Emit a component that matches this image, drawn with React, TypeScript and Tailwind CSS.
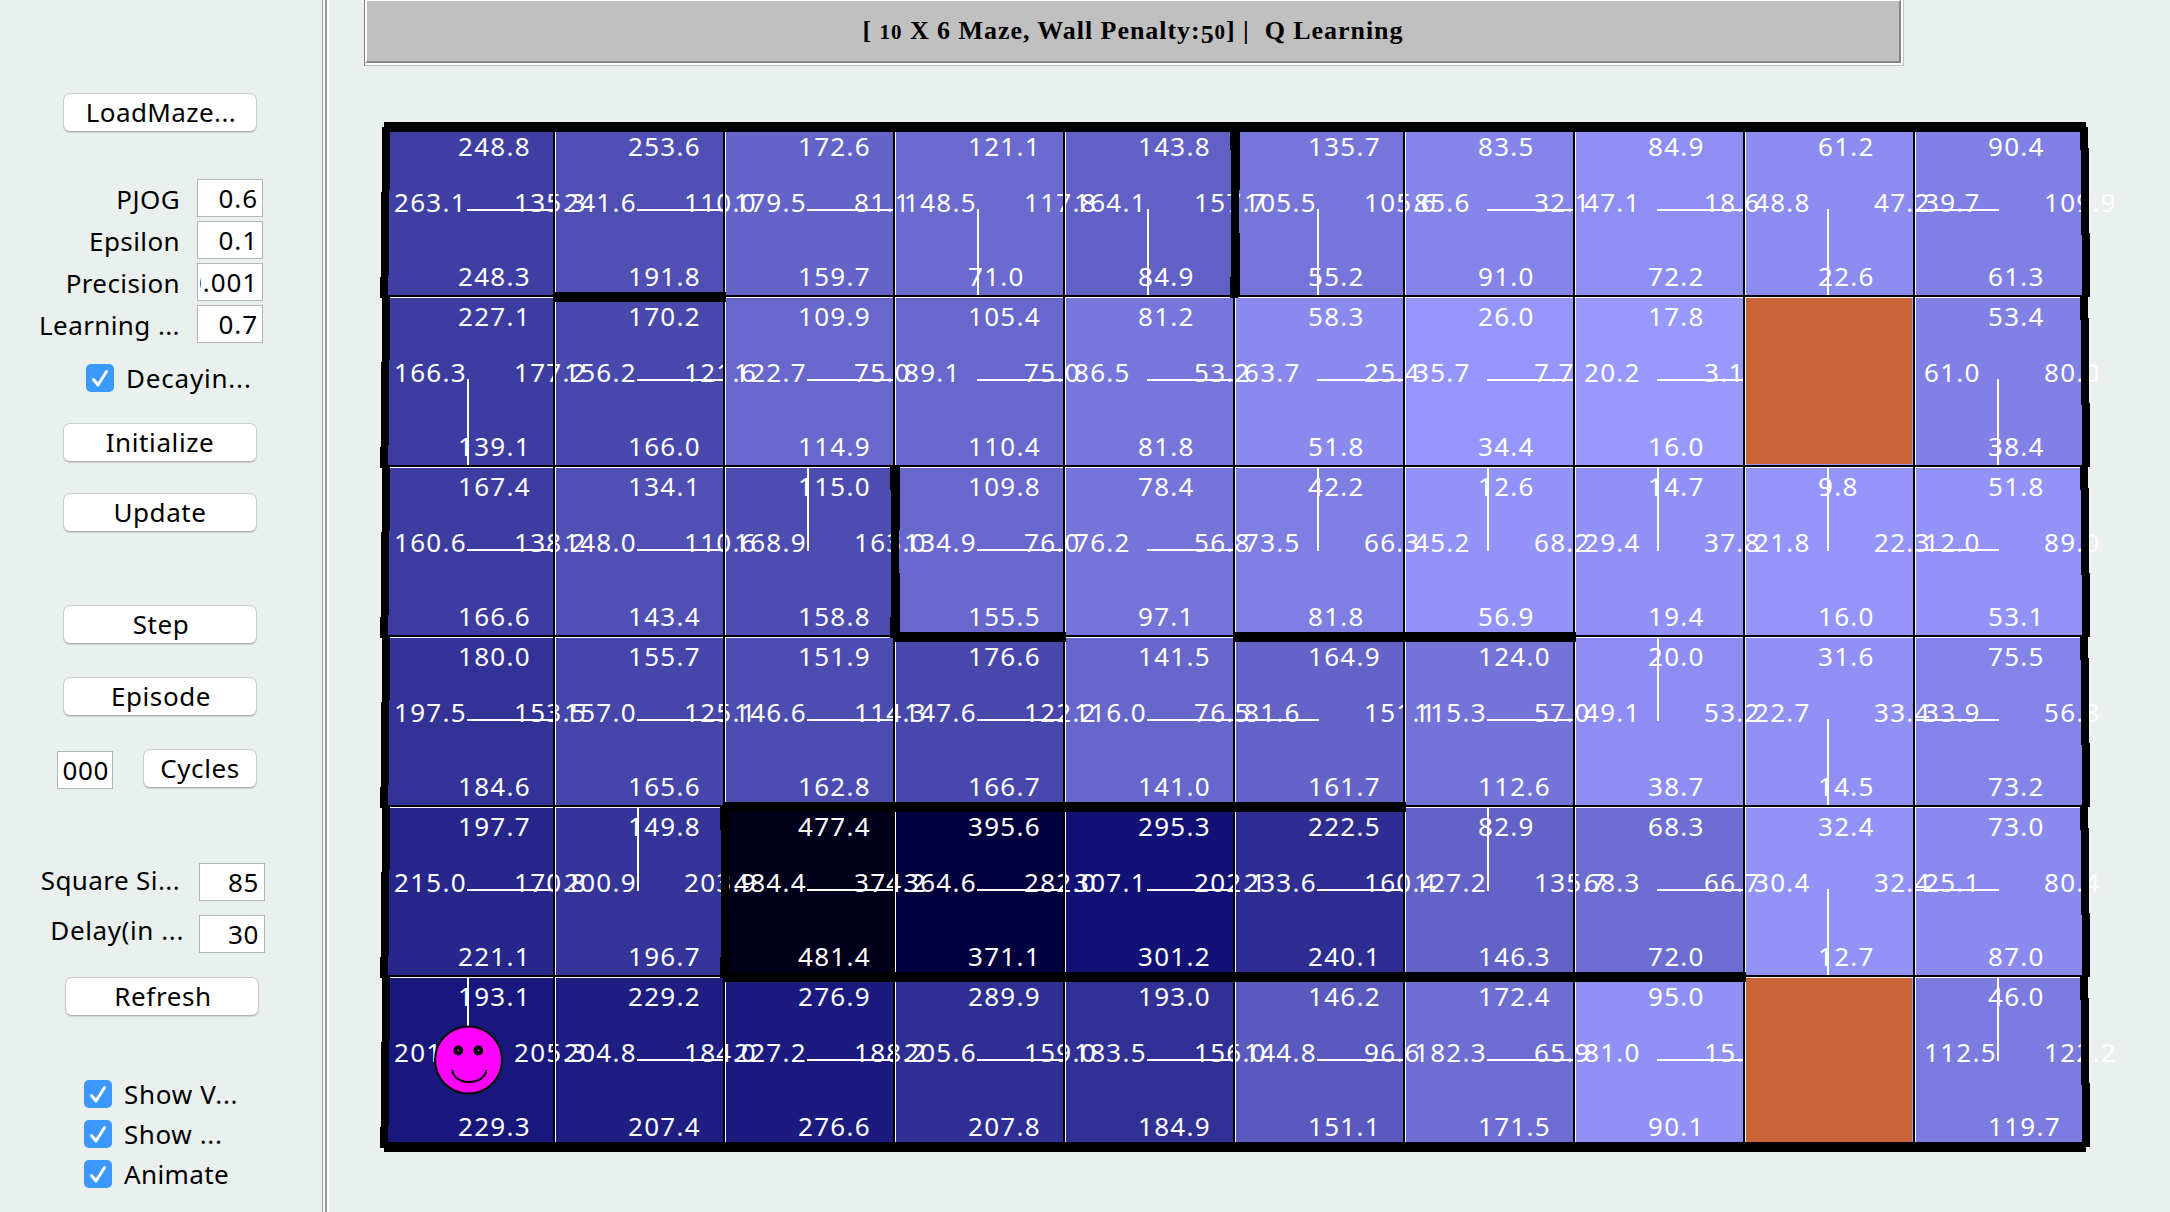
import React from "react";

type Cell = [string, string, string, string] | null; // top, bottom, left, right

const parse = (row: string): Cell[] =>
  row.split("|").map((c) => {
    const v = c.trim().split(" ");
    return v.length === 4 ? (v as [string, string, string, string]) : null;
  });

const ROWS: Cell[][] = [
  "248.8 248.3 263.1 135.3|253.6 191.8 241.6 110.0|172.6 159.7 179.5 81.1|121.1 71.0 148.5 117.8|143.8 84.9 164.1 157.7|135.7 55.2 105.5 105.6|83.5 91.0 85.6 32.1|84.9 72.2 47.1 18.6|61.2 22.6 48.8 47.2|90.4 61.3 39.7 109.9",
  "227.1 139.1 166.3 177.2|170.2 166.0 156.2 121.6|109.9 114.9 122.7 75.0|105.4 110.4 89.1 75.0|81.2 81.8 86.5 53.2|58.3 51.8 63.7 25.4|26.0 34.4 35.7 7.7|17.8 16.0 20.2 3.1|goal|53.4 38.4 61.0 80.0",
  "167.4 166.6 160.6 138.2|134.1 143.4 148.0 110.6|115.0 158.8 168.9 163.0|109.8 155.5 134.9 76.0|78.4 97.1 76.2 56.8|42.2 81.8 73.5 66.3|12.6 56.9 45.2 68.2|14.7 19.4 29.4 37.8|9.8 16.0 21.8 22.3|51.8 53.1 12.0 89.0",
  "180.0 184.6 197.5 153.5|155.7 165.6 157.0 125.1|151.9 162.8 146.6 114.3|176.6 166.7 147.6 122.2|141.5 141.0 116.0 76.5|164.9 161.7 81.6 151.1|124.0 112.6 115.3 57.0|20.0 38.7 49.1 53.2|31.6 14.5 22.7 33.4|75.5 73.2 33.9 56.8",
  "197.7 221.1 215.0 170.8|149.8 196.7 200.9 203.9|477.4 481.4 484.4 374.2|395.6 371.1 364.6 282.0|295.3 301.2 307.1 202.1|222.5 240.1 233.6 160.4|82.9 146.3 127.2 135.7|68.3 72.0 68.3 66.7|32.4 12.7 30.4 32.4|73.0 87.0 25.1 80.4",
  "193.1 229.3 201 205.3|229.2 207.4 204.8 184.0|276.9 276.6 227.2 188.2|289.9 207.8 205.6 159.0|193.0 184.9 183.5 156.0|146.2 151.1 144.8 96.6|172.4 171.5 182.3 65.9|95.0 90.1 81.0 15.|goal|46.0 119.7 112.5 122.2",
].map(parse);

const POLICY_LINE = [
  "left-[82px] top-0 w-[2px] h-[84px]",
  "left-[82px] top-[82px] w-[2px] h-[86px]",
  "left-0 top-[82px] w-[84px] h-[2px]",
  "left-[82px] top-[82px] w-[86px] h-[2px]",
];

const shade = (v: number) => {
  const rg = Math.round(155.2 - 0.68 * v);
  const c = Math.max(0, rg);
  return `rgb(${c}, ${c}, ${Math.max(28, rg + 100)})`;
};

const VALUE = "absolute z-10 whitespace-pre text-[26px] leading-[26px] tracking-[1.3px] text-white";

function MazeCell({ cell }: { cell: Cell }) {
  const nums = cell ? cell.map(Number) : [0];
  const best = Math.min(...nums);
  return (
    <div
      className="relative h-[170px] w-[170px] border-l border-t border-white"
      style={{ backgroundColor: cell ? shade(best) : "#9999fd" }}
    >
      <div className="absolute -left-px -top-px h-[170px] w-[170px]">
        {cell && (
          <>
            <span className={`${VALUE} left-[73px] top-[6px]`}>{cell[0]}</span>
            <span className={`${VALUE} left-[73px] top-[136px]`}>{cell[1]}</span>
            <span className={`${VALUE} left-[9px] top-[62px]`}>{cell[2]}</span>
            <span className={`${VALUE} left-[129px] top-[62px]`}>{cell[3]}</span>
            <i className={`absolute z-10 bg-white ${POLICY_LINE[nums.indexOf(best)]}`} />
          </>
        )}
        <i className="absolute inset-0 z-20 border-b-2 border-r-2 border-black" />
        {!cell && <i className="absolute left-px top-px z-30 h-[166px] w-[166px] bg-[#c86437]" />}
      </div>
    </div>
  );
}

// [row boundary, first column, last column]
const H_WALLS = [
  [0, 0, 9], [6, 0, 9], [1, 1, 1], [3, 3, 3], [3, 5, 6], [4, 2, 5], [5, 2, 7],
];
// [column whose left side is walled, row]
const LEFT_WALLS = [[0, 0], [0, 1], [0, 2], [0, 3], [0, 4], [0, 5], [5, 0], [3, 2], [2, 4]];
const RIGHT_WALLS = [[9, 0], [9, 1], [9, 2], [9, 3], [9, 4], [9, 5], [4, 0], [2, 2], [1, 4]];

function Walls() {
  return (
    <svg
      className="pointer-events-none absolute left-0 top-0 z-40 overflow-visible"
      width="1700"
      height="1020"
      shapeRendering="crispEdges"
    >
      {LEFT_WALLS.map(([c, r]) => (
        <path
          key={`l${c}${r}`}
          transform={`translate(${c * 170} ${r * 170})`}
          d="M-3 0H5V63H4V148H3V171H-5V150H-4V65H-3Z"
        />
      ))}
      {RIGHT_WALLS.map(([c, r]) => (
        <path
          key={`r${c}${r}`}
          transform={`translate(${c * 170} ${r * 170})`}
          d="M165 0H173V21H174V106H175V170H167V108H166V23H165Z"
        />
      ))}
      {H_WALLS.map(([r, a, b]) => (
        <rect key={`h${r}${a}`} x={a * 170 - 1} y={r * 170 - 5} width={(b - a + 1) * 170 + 2} height="10" />
      ))}
    </svg>
  );
}

function Agent() {
  return (
    <svg className="absolute left-[48px] top-[897px] z-30" width="72" height="72" viewBox="0 0 72 72">
      <circle cx="35.5" cy="36" r="33.5" fill="#ff00ff" stroke="#000" strokeWidth="2" />
      <circle cx="25.3" cy="26.5" r="2.900" fill="#ff00ff" stroke="#000" strokeWidth="4" />
      <circle cx="45.3" cy="26.5" r="2.900" fill="#ff00ff" stroke="#000" strokeWidth="4" />
      <path d="M19.5 46C19.5 53 27 58 36 58S53 53 53.300 46" fill="none" stroke="#000" strokeWidth="2" />
    </svg>
  );
}

function Button({ className, children }: { className: string; children: React.ReactNode }) {
  return (
    <button
      className={`flex h-[39px] items-center justify-center rounded-[7px] border border-[#c9cdcc] border-b-[#aeb1b0] bg-white pb-[2px] leading-none shadow-[0_1px_1px_rgba(0,0,0,0.12)] ${className}`}
    >
      {children}
    </button>
  );
}

function Field({ className, children }: { className: string; children: React.ReactNode }) {
  return (
    <div
      className={`flex h-[38px] shrink-0 items-center justify-end overflow-hidden border border-[#b4b8b7] bg-white leading-none ${className}`}
    >
      {children}
    </div>
  );
}

function Check({ label, className = "", text = "" }: { label: string; className?: string; text?: string }) {
  return (
    <label className={`flex h-7 items-center ${className}`}>
      <svg width="28" height="28" viewBox="0 0 28 28" className="shrink-0">
        <rect width="28" height="28" rx="5" fill="#3b99fc" />
        <path d="M7.500 15.500L12 21L20.500 7.500" fill="none" stroke="#fff" strokeWidth="3" strokeLinecap="round" strokeLinejoin="round" />
      </svg>
      <span className={`ml-3 whitespace-pre leading-none ${text}`}>{label}</span>
    </label>
  );
}

function Param({ label, value }: { label: string; value: string }) {
  return (
    <div className="flex h-[38px] items-center">
      <span className="w-[180px] whitespace-pre pt-[2px] text-right leading-none tracking-[0.4px]">{label}</span>
      <Field className="ml-[17px] w-[66px] pr-[4px]">
        <span className="flex w-[58px] justify-end overflow-hidden leading-[34px] tracking-[0.9px]">{value}</span>
      </Field>
    </div>
  );
}

export default function App() {
  return (
    <div className="flex h-[1212px] w-[2170px] overflow-hidden bg-[#eaf0ee] font-['Noto_Sans',sans-serif] text-[26px] tracking-[0.6px] text-black">
      <aside className="flex w-[322px] shrink-0 flex-col pt-[93px]">
        <Button className="ml-[63px] w-[194px] pl-[2px] tracking-[0.4px]">LoadMaze...</Button>
        <div className="mt-[47px] flex flex-col gap-1">
          <Param label="PJOG" value="0.6" />
          <Param label="Epsilon" value="0.1" />
          <Param label="Precision" value="0.001" />
          <Param label="Learning ..." value="0.7" />
        </div>
        <Check className="ml-[86px] mt-[21px]" text="tracking-[0.8px]" label="Decayin..." />
        <Button className="ml-[63px] mt-[31px] w-[194px]">Initialize</Button>
        <Button className="ml-[63px] mt-[31px] w-[194px]">Update</Button>
        <Button className="ml-[63px] mt-[73px] w-[194px] pl-[2px]">Step</Button>
        <Button className="ml-[63px] mt-[33px] w-[194px] pl-[2px]">Episode</Button>
        <div className="ml-[57px] mt-[33px] flex h-[40px]">
          <Field className="mt-[2px] w-[56px] pr-[3px]">000</Field>
          <Button className="ml-[30px] w-[114px]">Cycles</Button>
        </div>
        <div className="mt-[74px] flex h-[38px]">
          <span className="w-[180px] whitespace-pre pt-[4px] text-right leading-none tracking-[0.4px]">Square Si...</span>
          <Field className="ml-[19px] w-[66px] pr-[5px]">85</Field>
        </div>
        <div className="mt-[14px] flex h-[38px]">
          <span className="w-[184px] whitespace-pre pt-[2px] text-right leading-none">Delay(in ...</span>
          <Field className="ml-[15px] w-[66px] pr-[5px]">30</Field>
        </div>
        <Button className="ml-[65px] mt-[24px] w-[194px] pl-[2px]">Refresh</Button>
        <div className="ml-[84px] mt-[64px] flex flex-col gap-3">
          <Check text="tracking-[0.7px]" label="Show V..." />
          <Check label="Show ..." />
          <Check text="tracking-[0.4px]" label="Animate" />
        </div>
      </aside>

      <div className="flex w-[7px] shrink-0">
        <i className="w-px bg-[#a2a5a4]" />
        <i className="w-[2px] bg-[#f8fafa]" />
        <i className="w-[2px] bg-[#999b9a]" />
        <i className="w-[2px] bg-white" />
      </div>

      <main className="flex flex-col items-start">
        <header className="ml-[35px] h-[66px] w-[1540px] border-b border-l border-r border-b-[#c0c0c0] border-l-[#808080] border-r-[#c0c0c0]">
          <div className="h-[65px] border-b-2 border-r-2 border-white">
            <div className="flex h-[63px] items-center justify-center border-b-2 border-l-2 border-r-2 border-t border-b-[#848484] border-l-white border-r-[#848484] border-t-white bg-[#c0c0c0]">
              <h1 className="whitespace-pre font-['Liberation_Serif',serif] text-[26px] font-bold leading-none tracking-[0.95px]">
                [ <span className="text-[21px]">10</span> X 6 Maze, Wall Penalty:
                <span className="relative top-[4px]">5</span>
                <span className="text-[21px]">0</span>] |{"  "}Q Learning
              </h1>
            </div>
          </div>
        </header>

        <section className="relative isolate ml-[56px] mt-[61px] grid w-[1700px] grid-cols-[repeat(10,170px)]">
          {ROWS.map((row, r) => row.map((cell, c) => <MazeCell key={`${r}-${c}`} cell={cell} />))}
          <Agent />
          <Walls />
        </section>
      </main>
    </div>
  );
}
